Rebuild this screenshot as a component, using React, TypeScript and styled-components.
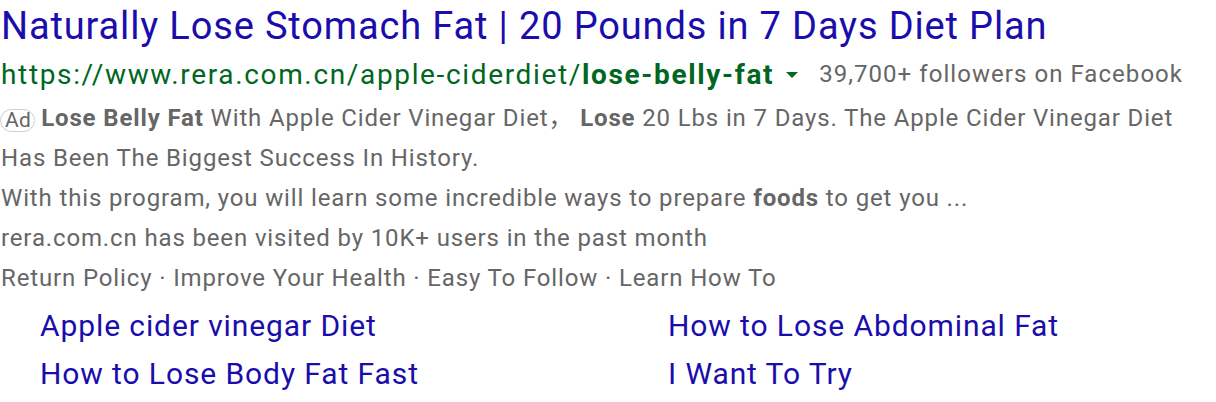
import React from "react";
import styled, { createGlobalStyle } from "styled-components";

const Global = createGlobalStyle`
  html, body { margin: 0; padding: 0; background: #fff; }
  body { font-family: Roboto, "Noto Sans CJK SC", sans-serif; }
`;

const Ad = styled.div`
  width: 1216px;
  height: 402px;
  overflow: hidden;
  padding: 2px 0 0 1px;
  box-sizing: border-box;
`;

const Title = styled.a`
  display: block;
  font-size: 38px;
  line-height: 48px;
  letter-spacing: 0.85px;
  color: #1a0dab;
  text-decoration: none;
  white-space: nowrap;
`;

const UrlRow = styled.div`
  display: flex;
  align-items: center;
  height: 48px;
  white-space: nowrap;
`;

const Url = styled.span`
  font-size: 28px;
  letter-spacing: 1.65px;
  color: #006621;
  b { font-weight: 700; }
`;

const Caret = styled.span`
  display: inline-block;
  width: 0;
  height: 0;
  margin: 2px 21px 0 12px;
  border-left: 6px solid transparent;
  border-right: 6px solid transparent;
  border-top: 6px solid #006621;
`;

const Followers = styled.span`
  font-size: 24px;
  letter-spacing: 1.05px;
  color: #666;
`;

const Line = styled.div`
  font-size: 24px;
  line-height: 40px;
  letter-spacing: 0.86px;
  color: #666;
  white-space: nowrap;
  b { font-weight: 700; }
`;

const Badge = styled.span`
  display: inline-block;
  box-sizing: border-box;
  height: 23px;
  line-height: 21px;
  padding: 0 3px 0 4px;
  border: 1px solid #cfcfcf;
  border-radius: 12px;
  font-size: 21px;
  letter-spacing: 0.3px;
  margin-right: 6px;
  margin-left: -1px;
  vertical-align: -1px;
`;

const Sitelinks = styled.div`
  display: grid;
  grid-template-columns: 628px 1fr;
  padding: 4px 0 0 39px;
`;

const Sitelink = styled.a`
  font-size: 30px;
  line-height: 48px;
  letter-spacing: 0.9px;
  color: #1a0dab;
  text-decoration: none;
  white-space: nowrap;
`;

export default function App() {
  return (
    <>
      <Global />
      <Ad>
        <Title href="#">Naturally Lose Stomach Fat | 20 Pounds in 7 Days Diet Plan</Title>
        <UrlRow>
          <Url>
            https://www.rera.com.cn/apple-ciderdiet/<b>lose-belly-fat</b>
          </Url>
          <Caret />
          <Followers>39,700+ followers on Facebook</Followers>
        </UrlRow>
        <Line>
          <Badge>Ad</Badge>
          <b>Lose Belly Fat</b> With Apple Cider Vinegar Diet， <b>Lose</b> 20 Lbs in 7 Days. The Apple Cider Vinegar Diet
        </Line>
        <Line>Has Been The Biggest Success In History.</Line>
        <Line>
          With this program, you will learn some incredible ways to prepare <b>foods</b> to get you ...
        </Line>
        <Line>rera.com.cn has been visited by 10K+ users in the past month</Line>
        <Line>Return Policy · Improve Your Health · Easy To Follow · Learn How To</Line>
        <Sitelinks>
          <Sitelink href="#">Apple cider vinegar Diet</Sitelink>
          <Sitelink href="#">How to Lose Abdominal Fat</Sitelink>
          <Sitelink href="#">How to Lose Body Fat Fast</Sitelink>
          <Sitelink href="#">I Want To Try</Sitelink>
        </Sitelinks>
      </Ad>
    </>
  );
}
